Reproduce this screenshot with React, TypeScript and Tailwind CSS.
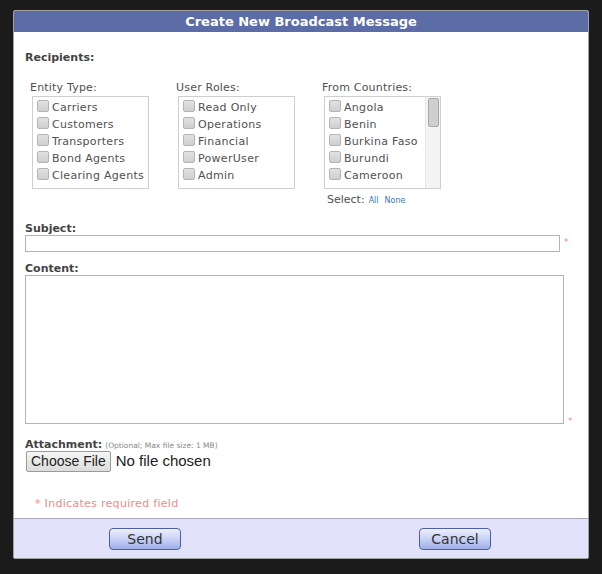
import React from "react";

const entityTypes = ["Carriers", "Customers", "Transporters", "Bond Agents", "Clearing Agents"];
const userRoles = ["Read Only", "Operations", "Financial", "PowerUser", "Admin"];
const countries = ["Angola", "Benin", "Burkina Faso", "Burundi", "Cameroon"];

function Check() {
  return (
    <span className="inline-block w-[12px] h-[12px] shrink-0 rounded-[2px] border border-[#b4b4b4] bg-gradient-to-b from-[#e2e2e2] to-[#cfcfcf]" />
  );
}

function CheckList({ label, items, scroll }: { label: string; items: string[]; scroll?: boolean }) {
  return (
    <div className="flex flex-col">
      <div className="text-[11px] leading-[13px] text-[#505050] tracking-[0.2px]">{label}</div>
      <div className="relative mt-[2px] ml-[2px] w-[117px] h-[93px] border border-[#cfcfcf] overflow-hidden">
        <div className="pt-[3px] pl-[4px] flex flex-col">
          {items.map((it) => (
            <div key={it} className="flex items-start gap-[3px] h-[17px]">
              <Check />
              <span className="text-[11px] leading-[13px] mt-[1px] text-[#505050] tracking-[0.3px] whitespace-nowrap">{it}</span>
            </div>
          ))}
          {scroll && (
            <div className="h-[4px] overflow-hidden">
              <Check />
            </div>
          )}
        </div>
        {scroll && (
          <div className="absolute right-0 top-0 bottom-0 w-[15px] bg-[#f4f4f4] border-l border-[#e4e4e4]">
            <div className="mx-auto mt-[1px] w-[11px] h-[29px] rounded-[2px] border border-[#a8a8a8] bg-[#cfcfcf]" />
          </div>
        )}
      </div>
    </div>
  );
}

function BlueButton({ children }: { children: React.ReactNode }) {
  return (
    <button className="h-[22px] w-[72px] rounded-[4px] border border-[#4d5fa0] bg-gradient-to-b from-[#eef0fe] via-[#c9d2f6] to-[#9fb0ea] text-[14px] leading-[18px] text-[#333]">
      {children}
    </button>
  );
}

export default function App() {
  return (
    <div className="w-[602px] h-[574px] bg-[#1b1b1b] pt-[10px] pl-[13px] font-['DejaVu_Sans',Verdana,sans-serif]">
      <div className="w-[576px] h-[549px] bg-white border border-[#a0a0a0] rounded-[2px] flex flex-col overflow-hidden">
        <div className="h-[21px] bg-[#5b6ca6] text-white text-[13px] font-bold leading-[21px] text-center">
          Create New Broadcast Message
        </div>

        <div className="flex-1 pl-[11px] flex flex-col">
          <div className="mt-[19px] text-[11px] leading-[13px] font-bold text-[#444]">Recipients:</div>

          <div className="mt-[17px] pl-[5px] flex gap-[27px]">
            <CheckList label="Entity Type:" items={entityTypes} />
            <CheckList label="User Roles:" items={userRoles} />
            <div className="flex flex-col">
              <CheckList label="From Countries:" items={countries} scroll />
              <div className="mt-[4px] pl-[5px] flex items-baseline gap-[4px]">
                <span className="text-[11px] leading-[13px] text-[#505050]">Select:</span>
                <span className="text-[8px] text-[#3a78b0]">All</span>
                <span className="ml-[2px] text-[8px] text-[#3a78b0]">None</span>
              </div>
            </div>
          </div>

          <div className="mt-[15px] text-[11px] leading-[13px] font-bold text-[#444]">Subject:</div>
          <div className="flex items-start">
            <div className="w-[535px] h-[17px] border border-[#b4b4b4]" />
            <span className="ml-[4px] mt-[1px] text-[9px] text-[#f08a9a]">*</span>
          </div>

          <div className="mt-[11px] text-[11px] leading-[12px] font-bold text-[#444]">Content:</div>
          <div className="flex items-end">
            <div className="w-[539px] h-[149px] border border-[#b4b4b4]" />
            <span className="ml-[4px] mb-[-4px] text-[9px] text-[#f08a9a]">*</span>
          </div>

          <div className="mt-[14px] flex items-baseline h-[13px] leading-[13px]">
            <span className="text-[11px] leading-[13px] font-bold text-[#444]">Attachment:</span>
            <span className="ml-[3px] text-[7.5px] leading-[13px] text-[#888]">(Optional; Max file size: 1 MB)</span>
          </div>
          <div className="mt-[-1px] ml-[1px] flex items-center font-['Liberation_Sans',Arial,sans-serif]">
            <div className="h-[21px] px-[4px] border border-[#9a9a9a] rounded-[2px] bg-gradient-to-b from-[#f6f6f6] to-[#dcdcdc] text-[14px] leading-[19px] text-[#222]">
              Choose File
            </div>
            <span className="ml-[5px] text-[15px] text-[#222]">No file chosen</span>
          </div>

          <div className="mt-[24px] ml-[10px] text-[11px] leading-[13px] text-[#f08a8a] tracking-[0.3px]">* Indicates required field</div>
        </div>

        <div className="h-[40px] bg-[#e2e2fa] border-t border-[#a8a8b8] flex items-center pl-[95px]">
          <BlueButton>Send</BlueButton>
          <div className="ml-[238px]">
            <BlueButton>Cancel</BlueButton>
          </div>
        </div>
      </div>
    </div>
  );
}
